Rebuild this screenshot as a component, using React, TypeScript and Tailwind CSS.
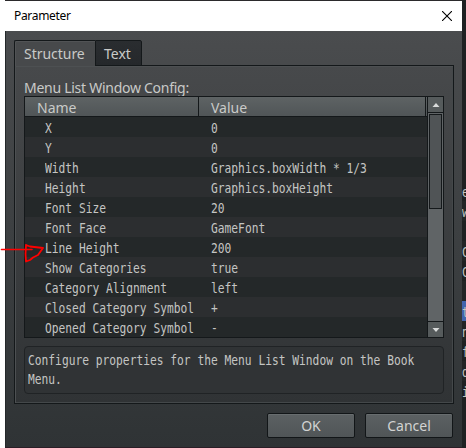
import type { ReactNode } from "react";

const rows = [
    { name: "X", value: "0" },
    { name: "Y", value: "0" },
    { name: "Width", value: "Graphics.boxWidth * 1/3" },
    { name: "Height", value: "Graphics.boxHeight" },
    { name: "Font Size", value: "20" },
    { name: "Font Face", value: "GameFont" },
    { name: "Line Height", value: "200" },
    { name: "Show Categories", value: "true" },
    { name: "Category Alignment", value: "left" },
    { name: "Closed Category Symbol", value: "+" },
    { name: "Opened Category Symbol", value: "-" },
];

// Code of the editor that shows past the right edge of the dialog
const editorLines = ["e", "w", "", "C", "C", "", "t", "n", "f", "d", "i"];

// Narrow monospace: DejaVu squeezed horizontally
function Mono({ children }: { children: ReactNode }) {
    return (
        <span className="block origin-left scale-x-[0.804] whitespace-pre font-['DejaVu_Sans_Mono',monospace] text-[14px] text-[#c4c5c3]">
            {children}
        </span>
    );
}

function DialogButton({ children }: { children: ReactNode }) {
    return (
        <button className="h-[25px] w-[88px] rounded-[2px] border border-[#121618] bg-linear-to-b from-[#5c6163] to-[#505557] text-center text-[14px] leading-[23px] text-[#d2d3d2] shadow-[inset_0_1px_0_#686d6f]">
            {children}
        </button>
    );
}

function ScrollBar() {
    return (
        <div className="flex w-4 flex-col border-l border-[#14181a] bg-[#606466]">
            <div className="flex h-4 items-center justify-center border-b border-[#14181a] bg-[#565b5c]">
                <svg width="8" height="4" viewBox="0 0 8 4">
                    <path d="M4 0L7.5 4H.5z" fill="#d8dada" />
                </svg>
            </div>
            <div className="flex-1 p-px">
                <div className="h-[95px] border border-[#15191b] bg-[#505456]" />
            </div>
            <div className="flex h-4 items-center justify-center border-t border-[#14181a] bg-[#565b5c]">
                <svg width="8" height="4" viewBox="0 0 8 4">
                    <path d="M4 4L7.5 0H.5z" fill="#d8dada" />
                </svg>
            </div>
        </div>
    );
}

export default function App() {
    return (
        <div className="relative flex h-[448px] w-[466px] overflow-hidden bg-[#1d2021] font-['Noto_Sans',sans-serif]">
            <div className="w-[5px] shrink-0 bg-white" />

            {/* Dialog */}
            <div className="flex w-[457px] shrink-0 flex-col border-t border-[#2b2a2c]">
                <div className="flex h-[30px] shrink-0 items-center justify-between bg-white pr-[10px] pl-[9px]">
                    <span className="text-[12px] leading-[30px] tracking-[-0.32px] text-black">Parameter</span>
                    <svg width="10" height="10" viewBox="0 0 10 10" stroke="#000" strokeWidth="1.1">
                        <path d="M0 0L10 10M10 0L0 10" />
                    </svg>
                </div>

                <div className="flex h-[416px] shrink-0 flex-col border-l border-[#24282a] bg-linear-to-b from-[#4a4c4e] to-[#2f3335] pt-[9px] pr-2 pl-2">
                    {/* Tabs */}
                    <div className="z-10 flex h-[26px] shrink-0">
                        <div className="h-[26px] w-[81px] rounded-tl-[2px] border-t border-l border-[#14181a] bg-[#47494b] pl-[9px] text-[14px] leading-[25px] tracking-[-0.03px] text-[#c9cac8] shadow-[inset_1px_1px_0_#515355]">
                            Structure
                        </div>
                        <div className="h-[26px] w-[47px] rounded-tr-[2px] border border-[#14181a] bg-linear-to-b from-[#2a2d30] to-[#25282b] pl-[8px] text-[14px] leading-[25px] text-[#c9cac8]">
                            Text
                        </div>
                    </div>

                    <div className="-mt-px flex h-[339px] shrink-0 flex-col border border-[#14181a] bg-linear-to-b from-[#47494b] to-[#303335] px-[9px] pt-[13px] shadow-[inset_1px_1px_0_#4d5052,inset_-1px_-1px_0_#44484a]">
                        <div className="h-[17px] text-[14px] leading-[17px] tracking-[-0.27px] whitespace-nowrap text-[#c9cac8]">
                            Menu List Window Config:
                        </div>

                        {/* Table */}
                        <div className="flex h-[242px] shrink-0 border border-[#14181a] bg-[#242829]">
                            <div className="flex-1">
                                <div className="flex h-5 border-b border-[#14181a] bg-linear-to-b from-[#5e6364] to-[#505557] text-[14px] leading-[21px] text-[#c9cac8]">
                                    <div className="w-[174px] border-r border-[#14181a] pl-3">Name</div>
                                    <div className="flex-1 border-r border-[#14181a] pl-3">Value</div>
                                    <div className="w-px" />
                                </div>
                                {rows.map((row, i) => (
                                    <div key={row.name} className={`flex h-5 pl-5 leading-[23px] ${i % 2 ? "bg-[#2c2e30]" : "bg-[#242829]"}`}>
                                        <div className="w-[166px]">
                                            <Mono>{row.name}</Mono>
                                        </div>
                                        <div className="w-[200px]">
                                            <Mono>{row.value}</Mono>
                                        </div>
                                    </div>
                                ))}
                            </div>
                            <ScrollBar />
                        </div>

                        {/* Description */}
                        <div className="mt-2 h-12 shrink-0 rounded-[4px] border border-[#202325] bg-[#303335] pt-[4px] pl-[3px] leading-[19px]">
                            <Mono>{"Configure properties for the Menu List Window on the Book\nMenu."}</Mono>
                        </div>
                    </div>

                    <div className="mt-[9px] mr-px flex justify-end gap-[10px]">
                        <DialogButton>OK</DialogButton>
                        <DialogButton>Cancel</DialogButton>
                    </div>
                </div>
                <div className="h-px bg-[#2a1e26]" />
            </div>

            {/* Editor behind */}
            <div className="flex-1 overflow-hidden bg-[#1e2122] pt-[181px] leading-[23px]">
                {editorLines.map((ch, i) => (
                    <div key={i} className={`h-5 ${ch === "t" ? "bg-[#4165ad]" : i % 2 ? "bg-[#222526]" : ""}`}>
                        <Mono>{ch}</Mono>
                    </div>
                ))}
            </div>

            {/* Hand-drawn marker */}
            <svg className="absolute top-[240px] left-0" width="46" height="26" fill="none" stroke="#ff0000" strokeLinecap="round" strokeLinejoin="round">
                <path d="M1.500 9.500H32" strokeWidth="1.600" />
                <path d="M26 5L30 6.500L43 8L38 15L33 17.500L30 20L26 21.500L25.500 14L26 5" strokeWidth="1.800" />
            </svg>
        </div>
    );
}
